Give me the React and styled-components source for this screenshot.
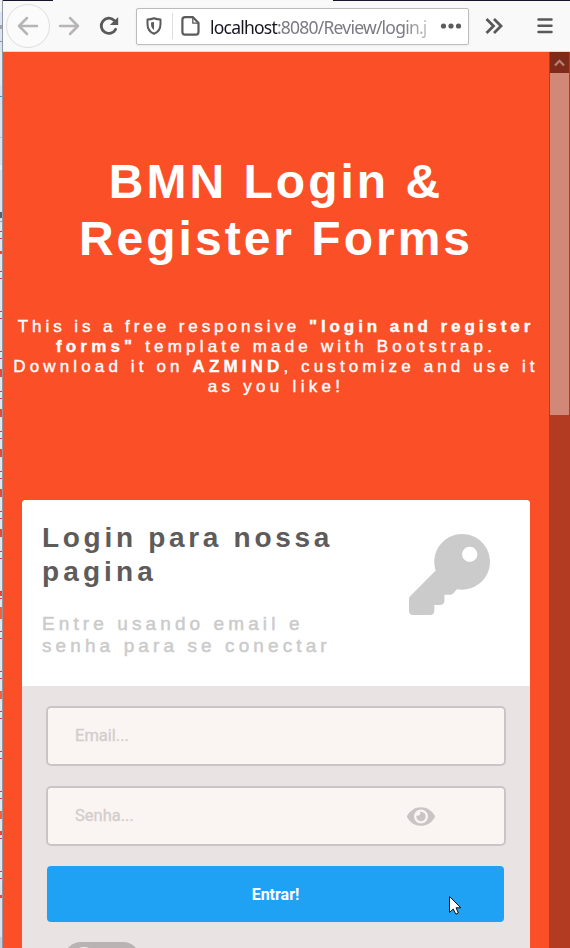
import React from "react";
import styled, { createGlobalStyle } from "styled-components";
import { FaEye, FaKey } from "react-icons/fa";

const GlobalStyle = createGlobalStyle`
  *, *::before, *::after { box-sizing: border-box; }
  html, body { margin: 0; height: 948px; overflow: hidden; }
  body { background: #fb4f27; font-family: "Liberation Sans", Arial, sans-serif; }
  h1, h2, p { margin: 0; }
`;

const Screen = styled.div`
  position: relative;
  display: flex;
  width: 570px;
  height: 948px;
  overflow: hidden;
`;

const mark = (y, height = 4, color = "#e84a33") =>
  `linear-gradient(${color}, ${color}) 0 ${y}px / 2px ${height}px no-repeat`;

const BackdropSliver = styled.div`
  flex: none;
  width: 3px;
  border-right: 1px solid #8f99a6;
  background:
    ${mark(25, 4, "#a3a3a8")},
    ${mark(41, 1, "#8d929b")},
    ${mark(96, 1, "#2f9fe8")},
    ${mark(137, 1, "#b9c4d6")},
    ${mark(212, 6, "#59606b")},
    ${mark(221, 1, "#9aa0a8")},
    ${mark(251, 3)},
    ${mark(369, 8)},
    ${mark(409, 8)},
    ${mark(449, 8)},
    ${mark(489, 8)},
    ${mark(529, 8)},
    ${mark(592, 4)},
    ${mark(607, 12, "#f2603c")},
    ${mark(691, 8, "#f2603c")},
    ${mark(811, 8, "#f2603c")},
    ${mark(831, 4)},
    ${mark(895, 3)},
    linear-gradient(#f1f1f4 0 12px, #dce4f1 12px 52px, #e8e9ed 52px 85px, #d9e1ee 85px 105px, #dfe2ea 105px 165px, #e9f1f8 165px 170px, #dfe2ea 170px 225px, transparent 225px 885px, #dfe2ea 885px 937px, #c9ccd5 937px),
    repeating-linear-gradient(#e3e5ed 0 31px, #e43535 31px 32px, #e3e5ed 32px 38px, #e43535 38px 39px, #e3e5ed 39px 40px);
`;

const Browser = styled.div`
  flex: 1;
  min-width: 0;
  display: flex;
  flex-direction: column;
`;

const TabEdge = styled.div`
  flex: none;
  height: 1px;
  background: linear-gradient(90deg, #17142e 0 50px, #f9f9fa 50px 330px, #17142e 330px);
`;

const Toolbar = styled.header`
  flex: none;
  display: flex;
  align-items: center;
  height: 51px;
  padding-left: 3px;
  background: #f9f9fa;
  border-bottom: 1px solid #dcdcdc;
  color: #5b5859;
`;

const BackButton = styled.button`
  display: grid;
  place-items: center;
  flex: none;
  width: 44px;
  height: 44px;
  padding: 0;
  border: 1px solid #dedede;
  border-radius: 50%;
  background: #fbfbfb;
  color: #b7b5b6;
`;

const ToolButton = styled.button`
  display: grid;
  place-items: center;
  flex: none;
  width: ${({ $width }) => $width}px;
  height: 42px;
  padding: 0;
  border: 0;
  background: none;
  color: ${({ $muted }) => ($muted ? "#b7b5b6" : "#5b5859")};
`;

const AddressBar = styled.div`
  flex: none;
  display: flex;
  align-items: center;
  width: 333px;
  height: 37px;
  margin-left: 7px;
  padding: 0 6px 0 8px;
  border: 1px solid #bcbcbc;
  border-radius: 2px;
  background: #fff;
  box-shadow: 0 1px 3px rgba(0, 0, 0, 0.06);

  svg { flex: none; }
`;

const AddressDivider = styled.span`
  width: 1px;
  height: 26px;
  margin: 0 8px 0 9px;
  background: #dddddf;
`;

const Address = styled.span`
  flex: 1;
  margin: 2px 0 0 10px;
  white-space: nowrap;
  font: 17.5px/26px "Noto Sans", "Open Sans", sans-serif;
  letter-spacing: -0.78px;
  color: #7c7a82;
  mask-image: linear-gradient(90deg, #000 84%, rgba(0, 0, 0, 0.15));

  b { font-weight: 400; color: #17151f; }
`;

const ToolbarDivider = styled.span`
  width: 1px;
  height: 42px;
  margin-left: 1px;
  background: #dddddf;
`;

const Viewport = styled.div`
  flex: 1;
  min-height: 0;
  display: flex;
`;

const Page = styled.main`
  flex: 1;
  min-width: 0;
  padding: 101px 19px 0;
  background: #fb4f27;
  overflow: hidden;
`;

const Line = styled.span`
  display: block;
  white-space: nowrap;
  letter-spacing: ${({ $track }) => $track}px;
`;

const Heading = styled.h1`
  margin: 0 -19px;
  font-size: 48px;
  line-height: 57px;
  font-weight: 700;
  text-align: center;
  color: #fff;
`;

const Intro = styled.p`
  margin: 50px -19px 0;
  font-size: 17px;
  line-height: 20px;
  text-align: center;
  color: #fff;
  -webkit-text-stroke: 0.4px #fff;
`;

const Card = styled.section`
  width: 508px;
  margin-top: 103px;
  border-radius: 4px 4px 0 0;
  overflow: hidden;
  background: #e9e4e3;
`;

const CardHeader = styled.div`
  display: flex;
  height: 186px;
  padding: 21px 40px 0 20px;
  background: #fff;
`;

const CardText = styled.div`
  flex: 1;
`;

const CardTitle = styled.h2`
  font-size: 28px;
  line-height: 34px;
  color: #5e5b5b;
`;

const CardSubtitle = styled.p`
  margin-top: 24px;
  font-size: 19px;
  line-height: 22px;
  color: #cbcbcb;
  -webkit-text-stroke: 0.5px #cbcbcb;
`;

const KeyIcon = styled(FaKey)`
  flex: none;
  width: 81px;
  height: 81px;
  margin-top: 13px;
  color: #cbcbcb;
`;

const Form = styled.form`
  display: flex;
  flex-direction: column;
  gap: 20px;
  padding: 20px 24px 0;
`;

const Field = styled.label`
  display: flex;
  align-items: center;
  justify-content: space-between;
  height: 60px;
  padding: 0 69px 2px 27px;
  border: 2px solid #cac5c4;
  border-radius: 5px;
  background: #faf4f3;
  font: 400 16.5px "Roboto", sans-serif;
  -webkit-text-stroke: 0.3px #d3cdcc;
  color: #d3cdcc;
`;

const EyeIcon = styled(FaEye)`
  width: 28px;
  height: 25px;
  margin-top: 3px;
  color: #cac5c4;
`;

const SubmitButton = styled.button`
  width: 457px;
  height: 56px;
  margin-left: 1px;
  padding: 0;
  border: 0;
  border-radius: 4px;
  background: #1fa1f4;
  font: 700 16px "Roboto", sans-serif;
  color: #fff;
`;

const Toggle = styled.span`
  width: 76px;
  height: 34px;
  margin-left: 18px;
  padding: 5px 8px;
  border-radius: 17px;
  background: #b9b4b3;

  &::before {
    content: "";
    display: block;
    width: 24px;
    height: 24px;
    border-radius: 50%;
    background: #f2eeee;
  }
`;

const Scrollbar = styled.aside`
  flex: none;
  display: flex;
  flex-direction: column;
  width: 21px;
  padding: 0 1px;
  background: #b33b21;
`;

const ScrollUp = styled.div`
  display: grid;
  place-items: center;
  height: 21px;
  background: #7f2b19;
  color: #b48275;
`;

const ScrollThumb = styled.div`
  height: 342px;
  background: #d18877;
`;

const Cursor = styled.svg`
  position: absolute;
  left: 448px;
  top: 895px;
`;

const Arrow = ({ flip }) => (
  <svg width="22" height="20" viewBox="0 0 22 20" fill="none" stroke="currentColor" strokeWidth="2.5" strokeLinecap="round" strokeLinejoin="round">
    <path d={flip ? "M2 10H20M12 2l8 8-8 8" : "M20 10H2M10 2L2 10l8 8"} />
  </svg>
);

export default function App() {
  return (
    <>
      <GlobalStyle />
      <Screen>
        <BackdropSliver />
        <Browser>
          <TabEdge />
          <Toolbar>
            <BackButton aria-label="Back"><Arrow /></BackButton>
            <ToolButton $width={38} $muted aria-label="Forward"><Arrow flip /></ToolButton>
            <ToolButton $width={41} aria-label="Reload">
              <svg width="20" height="20" viewBox="0 0 20 20" fill="none" stroke="currentColor" strokeWidth="2.8">
                <path d="M16.6 13.3A7.6 7.6 0 1 1 15.2 4.4" strokeLinecap="round" />
                <path d="M19.2 1v8h-8.300z" fill="currentColor" stroke="none" />
              </svg>
            </ToolButton>
            <AddressBar>
              <svg width="18" height="18" viewBox="0 0 18 18" fill="none" stroke="#5d5a5b" strokeWidth="2">
                <path d="M9 1.2c2 .8 4 1.2 6.500 1.300V7c0 5-2 8-6.500 9.800C4.500 15 2.500 12 2.500 7V2.500C5 2.400 7 2 9 1.200z" strokeLinejoin="round" />
                <path d="M9 5v8C7 11.500 6 10 6 7V5.600z" fill="#5d5a5b" stroke="none" />
              </svg>
              <AddressDivider />
              <svg width="19" height="20" viewBox="0 0 19 20" fill="none" stroke="#5d5a5b" strokeWidth="2.2" strokeLinejoin="round">
                <path d="M4 1.200h8L17.500 7v9a2.600 2.600 0 0 1-2.600 2.600H4A2.600 2.600 0 0 1 1.400 16V3.800A2.600 2.600 0 0 1 4 1.200z" />
                <path d="M11.800 1.500v5.700h5.500" strokeWidth="1.300" />
              </svg>
              <Address><b>localhost</b>:8080/Review/login.j</Address>
              <svg width="22" height="6" viewBox="0 0 22 6" fill="#5d5a5b">
                <circle cx="3.500" cy="3" r="2.600" /><circle cx="11" cy="3" r="2.600" /><circle cx="18.500" cy="3" r="2.600" />
              </svg>
            </AddressBar>
            <ToolButton $width={49} aria-label="More tools">
              <svg width="18" height="18" viewBox="0 0 18 18" fill="none" stroke="currentColor" strokeWidth="2.800">
                <path d="M1.500 2l7 7-7 7M9 2l7 7-7 7" />
              </svg>
            </ToolButton>
            <ToolbarDivider />
            <ToolButton $width={52} aria-label="Menu">
              <svg width="16" height="18" viewBox="0 0 16 18" fill="none" stroke="currentColor" strokeWidth="2.500" strokeLinecap="round">
                <path d="M1.500 2.500h13M1.500 8.700h13M1.500 14.900h13" />
              </svg>
            </ToolButton>
          </Toolbar>
          <Viewport>
            <Page>
              <Heading>
                <Line $track={3}>BMN Login &amp;</Line>
                <Line $track={3}>Register Forms</Line>
              </Heading>
              <Intro>
                <Line $track={3.93}>This is a free responsive <b>"login and register</b></Line>
                <Line $track={4.18}><b>forms"</b> template made with Bootstrap.</Line>
                <Line $track={4.13}>Download it on <b>AZMIND</b>, customize and use it</Line>
                <Line $track={4.3}>as you like!</Line>
              </Intro>
              <Card>
                <CardHeader>
                  <CardText>
                    <CardTitle>
                      <Line $track={3.7}>Login para nossa</Line>
                      <Line $track={4.1}>pagina</Line>
                    </CardTitle>
                    <CardSubtitle>
                      <Line $track={4.1}>Entre usando email e</Line>
                      <Line $track={4.1}>senha para se conectar</Line>
                    </CardSubtitle>
                  </CardText>
                  <KeyIcon />
                </CardHeader>
                <Form>
                  <Field>Email...</Field>
                  <Field>Senha...<EyeIcon /></Field>
                  <SubmitButton type="button">Entrar!</SubmitButton>
                  <Toggle />
                </Form>
              </Card>
            </Page>
            <Scrollbar>
              <ScrollUp>
                <svg width="11" height="9" viewBox="0 0 11 9" fill="none" stroke="currentColor" strokeWidth="2.300">
                  <path d="M1 7.500l4.500-4.700L10 7.500" />
                </svg>
              </ScrollUp>
              <ScrollThumb />
            </Scrollbar>
          </Viewport>
        </Browser>
        <Cursor width="14" height="21" viewBox="0 0 14 21">
          <path d="M1.500 1.500v16l3.700-3.500 2.700 5.200 2.500-1.200-2.300-5.200h4.700z" fill="#fff" stroke="#111" strokeWidth="1" />
        </Cursor>
      </Screen>
    </>
  );
}
